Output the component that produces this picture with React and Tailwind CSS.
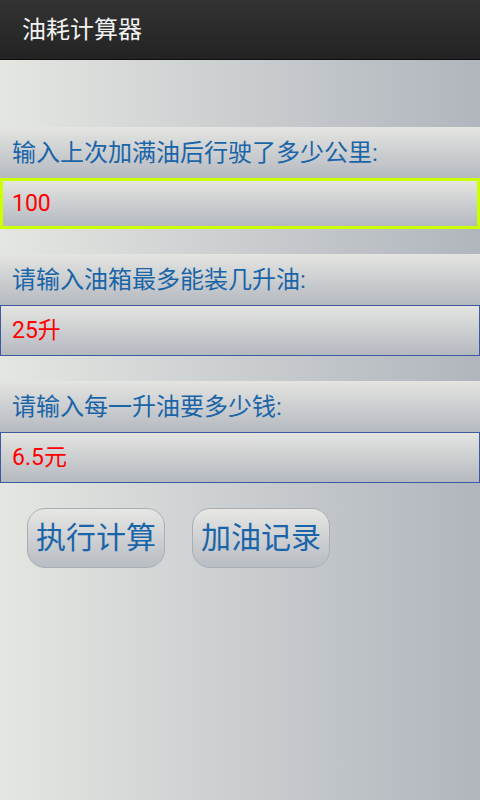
import React from "react";

const font = { fontFamily: 'Roboto, "Noto Sans CJK SC", sans-serif' };

const Field = ({ label, value, active }) => {
  return (
    <div>
      <div className="h-[51px] flex items-center px-3 bg-gradient-to-b from-[#e4e5e1] to-[#b5b9c0]">
        <span className="text-[24px] text-[#1a64a8] leading-none">{label}</span>
      </div>
      <div
        className={
          active
            ? "h-[51px] flex items-center px-[9px] border-[3px] border-[#ccff00] bg-gradient-to-b from-[#e4e5e1] to-[#b5b9c0]"
            : "h-[51px] flex items-center px-[11px] border border-[#3d5a9e] bg-gradient-to-b from-[#e4e5e1] to-[#b5b9c0]"
        }
      >
        <span className="text-[23px] text-[#ff0000] leading-none">{value}</span>
      </div>
    </div>
  );
};

export default function App() {
  return (
    <div className="w-[480px] min-h-[800px] flex flex-col bg-gradient-to-r from-[#e4e6e1] to-[#b1b6be]" style={font}>
      <div className="h-[60px] flex items-center px-[22px] bg-gradient-to-b from-[#333333] to-[#232323] border-b border-[#0d0d0d]">
        <span className="text-[24px] text-[#f2f2f2] leading-none">油耗计算器</span>
      </div>

      <div className="mt-[67px] flex flex-col gap-[25px]">
        <Field label="输入上次加满油后行驶了多少公里:" value="100" active />
        <Field label="请输入油箱最多能装几升油:" value="25升" />
        <Field label="请输入每一升油要多少钱:" value="6.5元" />
      </div>

      <div className="flex gap-[27px] pl-[27px] mt-[25px]">
        <button className="w-[138px] h-[60px] rounded-[18px] border border-[#a9aeb4] bg-gradient-to-b from-[#e6e7e4] to-[#b8bcc3] text-[30px] text-[#1a64a8] leading-none">
          执行计算
        </button>
        <button className="w-[138px] h-[60px] rounded-[18px] border border-[#a9aeb4] bg-gradient-to-b from-[#e6e7e4] to-[#b8bcc3] text-[30px] text-[#1a64a8] leading-none">
          加油记录
        </button>
      </div>
    </div>
  );
}
